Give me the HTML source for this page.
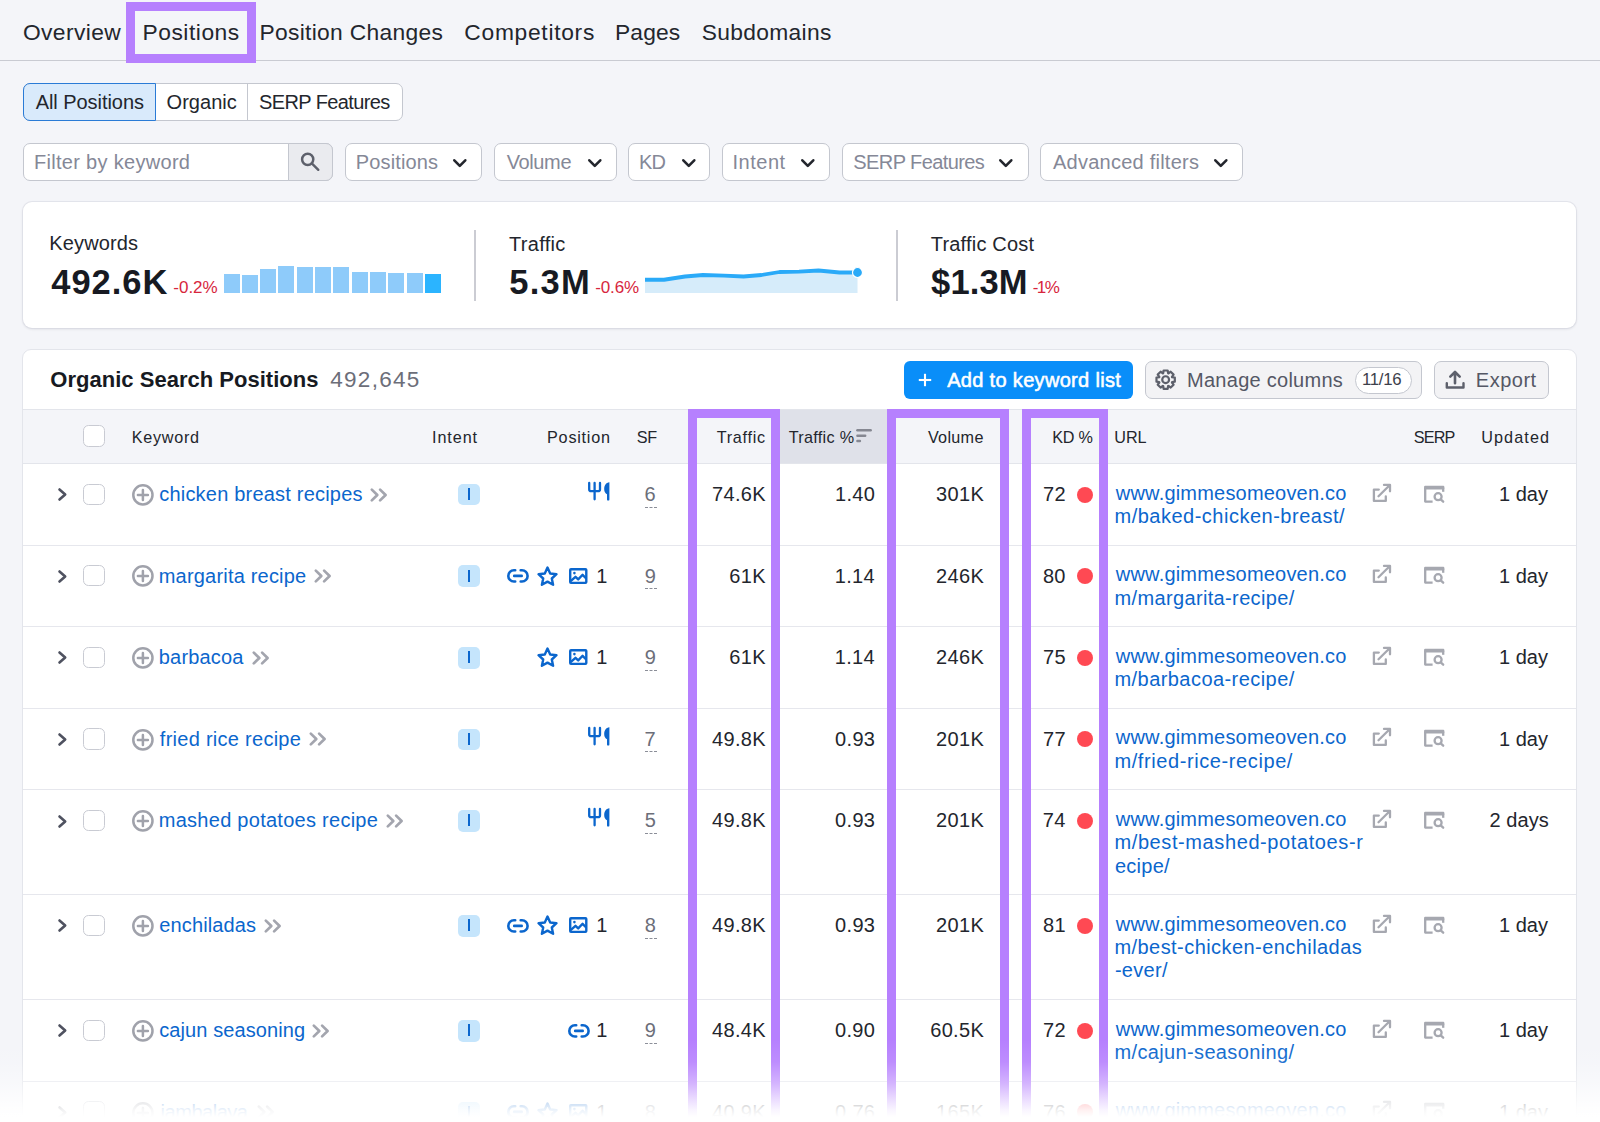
<!DOCTYPE html>
<html><head><meta charset="utf-8"><style>
html,body{margin:0;padding:0}
body{width:1600px;height:1122px;overflow:hidden;position:relative;background:#f4f5f9;font-family:"Liberation Sans", sans-serif}
.t{position:absolute;white-space:nowrap;line-height:1}
svg{display:block}
</style></head><body>
<div class="t" style="left:22.92px;top:20.90px;font-size:22.8px;color:#23262d;font-weight:normal;letter-spacing:0.401px;">Overview</div>
<div class="t" style="left:142.53px;top:20.90px;font-size:22.8px;color:#23262d;font-weight:normal;letter-spacing:0.523px;">Positions</div>
<div class="t" style="left:259.53px;top:20.90px;font-size:22.8px;color:#23262d;font-weight:normal;letter-spacing:0.305px;">Position Changes</div>
<div class="t" style="left:464.34px;top:20.90px;font-size:22.8px;color:#23262d;font-weight:normal;letter-spacing:0.708px;">Competitors</div>
<div class="t" style="left:614.93px;top:20.90px;font-size:22.8px;color:#23262d;font-weight:normal;letter-spacing:0.161px;">Pages</div>
<div class="t" style="left:701.86px;top:20.90px;font-size:22.8px;color:#23262d;font-weight:normal;letter-spacing:0.301px;">Subdomains</div>
<div style="position:absolute;left:0px;top:60px;width:1600px;height:1px;box-sizing:border-box;background:#c9cbd2"></div>
<div style="position:absolute;left:23px;top:83px;width:380px;height:38px;box-sizing:border-box;background:#fff;border:1px solid #c4c7cf;border-radius:7px"></div>
<div style="position:absolute;left:23px;top:83px;width:133px;height:38px;box-sizing:border-box;background:#d9eafb;border:1px solid #2a7bd6;border-radius:7px 0 0 7px"></div>
<div style="position:absolute;left:247px;top:84px;width:1px;height:36px;box-sizing:border-box;background:#c4c7cf"></div>
<div class="t" style="left:35.71px;top:91.82px;font-size:20px;color:#23262d;font-weight:normal;letter-spacing:-0.056px;">All Positions</div>
<div class="t" style="left:166.55px;top:91.82px;font-size:20px;color:#23262d;font-weight:normal;letter-spacing:0.033px;">Organic</div>
<div class="t" style="left:259.09px;top:91.82px;font-size:20px;color:#23262d;font-weight:normal;letter-spacing:-0.610px;">SERP Features</div>
<div style="position:absolute;left:23px;top:143px;width:310px;height:38px;box-sizing:border-box;background:#fff;border:1px solid #c4c7cf;border-radius:7px"></div>
<div style="position:absolute;left:288px;top:143px;width:45px;height:38px;box-sizing:border-box;background:#eaebef;border:1px solid #c4c7cf;border-radius:0 7px 7px 0"></div>
<div class="t" style="left:33.96px;top:151.67px;font-size:20px;color:#858897;font-weight:normal;letter-spacing:0.305px;">Filter by keyword</div>
<svg style="position:absolute;left:300px;top:151px;overflow:visible" width="20" height="20" viewBox="0 0 20 20"><circle cx="7.7" cy="8.3" r="5.6" fill="none" stroke="#5d606b" stroke-width="2.5"/><line x1="11.8" y1="12.4" x2="18.3" y2="18.8" stroke="#5d606b" stroke-width="2.4" stroke-linecap="round"/></svg>
<div style="position:absolute;left:344.5px;top:143px;width:137.89999999999998px;height:38px;box-sizing:border-box;background:#fff;border:1px solid #c4c7cf;border-radius:7px"></div>
<div class="t" style="left:355.86px;top:151.67px;font-size:20px;color:#858897;font-weight:normal;letter-spacing:0.114px;">Positions</div>
<svg style="position:absolute;left:453.2px;top:159px;overflow:visible" width="13.6" height="8.2" viewBox="0 0 13.6 8.2"><polyline points="1.3,1.3 6.8,6.8999999999999995 12.299999999999999,1.3" fill="none" stroke="#23262d" stroke-width="2.6" stroke-linecap="round" stroke-linejoin="round"/></svg>
<div style="position:absolute;left:494.25px;top:143px;width:122.25px;height:38px;box-sizing:border-box;background:#fff;border:1px solid #c4c7cf;border-radius:7px"></div>
<div class="t" style="left:506.66px;top:151.67px;font-size:20px;color:#858897;font-weight:normal;letter-spacing:-0.367px;">Volume</div>
<svg style="position:absolute;left:588px;top:159px;overflow:visible" width="13.6" height="8.2" viewBox="0 0 13.6 8.2"><polyline points="1.3,1.3 6.8,6.8999999999999995 12.299999999999999,1.3" fill="none" stroke="#23262d" stroke-width="2.6" stroke-linecap="round" stroke-linejoin="round"/></svg>
<div style="position:absolute;left:628.25px;top:143px;width:82.0px;height:38px;box-sizing:border-box;background:#fff;border:1px solid #c4c7cf;border-radius:7px"></div>
<div class="t" style="left:639.11px;top:151.67px;font-size:20px;color:#858897;font-weight:normal;letter-spacing:-0.936px;">KD</div>
<svg style="position:absolute;left:681.5px;top:159px;overflow:visible" width="13.6" height="8.2" viewBox="0 0 13.6 8.2"><polyline points="1.3,1.3 6.8,6.8999999999999995 12.299999999999999,1.3" fill="none" stroke="#23262d" stroke-width="2.6" stroke-linecap="round" stroke-linejoin="round"/></svg>
<div style="position:absolute;left:722px;top:143px;width:108px;height:38px;box-sizing:border-box;background:#fff;border:1px solid #c4c7cf;border-radius:7px"></div>
<div class="t" style="left:732.40px;top:151.67px;font-size:20px;color:#858897;font-weight:normal;letter-spacing:0.541px;">Intent</div>
<svg style="position:absolute;left:801px;top:159px;overflow:visible" width="13.6" height="8.2" viewBox="0 0 13.6 8.2"><polyline points="1.3,1.3 6.8,6.8999999999999995 12.299999999999999,1.3" fill="none" stroke="#23262d" stroke-width="2.6" stroke-linecap="round" stroke-linejoin="round"/></svg>
<div style="position:absolute;left:841.6px;top:143px;width:186.9999999999999px;height:38px;box-sizing:border-box;background:#fff;border:1px solid #c4c7cf;border-radius:7px"></div>
<div class="t" style="left:853.29px;top:151.67px;font-size:20px;color:#858897;font-weight:normal;letter-spacing:-0.585px;">SERP Features</div>
<svg style="position:absolute;left:999.3px;top:159px;overflow:visible" width="13.6" height="8.2" viewBox="0 0 13.6 8.2"><polyline points="1.3,1.3 6.8,6.8999999999999995 12.299999999999999,1.3" fill="none" stroke="#23262d" stroke-width="2.6" stroke-linecap="round" stroke-linejoin="round"/></svg>
<div style="position:absolute;left:1040.4px;top:143px;width:202.89999999999986px;height:38px;box-sizing:border-box;background:#fff;border:1px solid #c4c7cf;border-radius:7px"></div>
<div class="t" style="left:1052.96px;top:151.67px;font-size:20px;color:#858897;font-weight:normal;letter-spacing:0.244px;">Advanced filters</div>
<svg style="position:absolute;left:1213.5px;top:159px;overflow:visible" width="13.6" height="8.2" viewBox="0 0 13.6 8.2"><polyline points="1.3,1.3 6.8,6.8999999999999995 12.299999999999999,1.3" fill="none" stroke="#23262d" stroke-width="2.6" stroke-linecap="round" stroke-linejoin="round"/></svg>
<div style="position:absolute;left:23px;top:202px;width:1553px;height:126.3px;box-sizing:border-box;background:#fff;border-radius:9px;box-shadow:0 0 0 1px rgba(215,217,225,0.55), 0 1px 3px rgba(0,0,30,0.12)"></div>
<div class="t" style="left:49.36px;top:233.37px;font-size:20px;color:#23262d;font-weight:normal;letter-spacing:0.136px;">Keywords</div>
<div class="t" style="left:51.28px;top:264.50px;font-size:34.5px;color:#171a22;font-weight:bold;letter-spacing:0.959px;">492.6K</div>
<div class="t" style="left:173.24px;top:279.01px;font-size:17px;color:#d7263d;font-weight:normal;letter-spacing:0.013px;">-0.2%</div>
<div style="position:absolute;left:223.55px;top:273.90px;width:16.2px;height:18.90px;background:#8ecbfa"></div>
<div style="position:absolute;left:241.70px;top:274.65px;width:16.2px;height:18.15px;background:#8ecbfa"></div>
<div style="position:absolute;left:260.00px;top:268.65px;width:16.2px;height:24.15px;background:#8ecbfa"></div>
<div style="position:absolute;left:278.10px;top:265.80px;width:16.2px;height:27.00px;background:#8ecbfa"></div>
<div style="position:absolute;left:296.70px;top:267.45px;width:16.2px;height:25.35px;background:#8ecbfa"></div>
<div style="position:absolute;left:315.00px;top:266.55px;width:16.2px;height:26.25px;background:#8ecbfa"></div>
<div style="position:absolute;left:333.30px;top:266.85px;width:16.2px;height:25.95px;background:#8ecbfa"></div>
<div style="position:absolute;left:351.60px;top:271.95px;width:16.2px;height:20.85px;background:#8ecbfa"></div>
<div style="position:absolute;left:370.00px;top:272.40px;width:16.2px;height:20.40px;background:#8ecbfa"></div>
<div style="position:absolute;left:388.20px;top:272.85px;width:16.2px;height:19.95px;background:#8ecbfa"></div>
<div style="position:absolute;left:406.70px;top:273.45px;width:16.2px;height:19.35px;background:#8ecbfa"></div>
<div style="position:absolute;left:425.00px;top:273.60px;width:16.2px;height:19.20px;background:#2bb4ff"></div>
<div style="position:absolute;left:474.3px;top:230.25px;width:2px;height:70.5px;box-sizing:border-box;background:#cbccd3"></div>
<div class="t" style="left:509.05px;top:233.57px;font-size:20px;color:#23262d;font-weight:normal;letter-spacing:0.287px;">Traffic</div>
<div class="t" style="left:509.24px;top:264.50px;font-size:34.5px;color:#171a22;font-weight:bold;letter-spacing:1.290px;">5.3M</div>
<div class="t" style="left:595.24px;top:279.01px;font-size:17px;color:#d7263d;font-weight:normal;letter-spacing:-0.137px;">-0.6%</div>
<svg style="position:absolute;left:640px;top:260px;overflow:visible" width="230" height="40" viewBox="0 0 230 40"><polygon points="5,19.75 24,19.75 45,16.5 63,15 84,15.699999999999989 103.5,16.5 121.5,15 139.5,12 159,11.600000000000023 178.5,10.5 199.5,12.5 217.5,12.5 217.5,33 5,33" fill="#d6ecfa"/><polyline points="5,19.75 24,19.75 45,16.5 63,15 84,15.699999999999989 103.5,16.5 121.5,15 139.5,12 159,11.600000000000023 178.5,10.5 199.5,12.5 217.5,12.5" fill="none" stroke="#2aaaf8" stroke-width="3.8" stroke-linejoin="round"/><circle cx="217.5" cy="12.5" r="5" fill="#2aaaf8" stroke="#fff" stroke-width="1.2"/></svg>
<div style="position:absolute;left:895.8px;top:230.25px;width:2px;height:70.5px;box-sizing:border-box;background:#cbccd3"></div>
<div class="t" style="left:930.75px;top:233.57px;font-size:20px;color:#23262d;font-weight:normal;letter-spacing:0.196px;">Traffic Cost</div>
<div class="t" style="left:931.05px;top:264.50px;font-size:34.5px;color:#171a22;font-weight:bold;letter-spacing:0.144px;">$1.3M</div>
<div class="t" style="left:1032.74px;top:279.01px;font-size:17px;color:#d7263d;font-weight:normal;letter-spacing:-1.535px;">-1%</div>
<div style="position:absolute;left:22px;top:349px;width:1555px;height:900px;box-sizing:border-box;background:#fff;border:1px solid #e3e5eb;border-radius:9px"></div>
<div class="t" style="left:50.30px;top:369.08px;font-size:22px;color:#171a22;font-weight:bold;letter-spacing:0.020px;">Organic Search Positions</div>
<div class="t" style="left:330.18px;top:368.95px;font-size:22.5px;color:#6c6e79;font-weight:normal;letter-spacing:1.305px;">492,645</div>
<div style="position:absolute;left:903.5px;top:361px;width:229.5px;height:38px;box-sizing:border-box;background:#098ef9;border-radius:6px"></div>
<svg style="position:absolute;left:917.5px;top:372.5px;overflow:visible" width="14" height="14" viewBox="0 0 14 14"><line x1="7" y1="0.8" x2="7" y2="13.2" stroke="#fff" stroke-width="2.1"/><line x1="0.8" y1="7" x2="13.2" y2="7" stroke="#fff" stroke-width="2.1"/></svg>
<div class="t" style="left:947.16px;top:369.57px;font-size:20px;color:#fff;font-weight:normal;letter-spacing:0.324px;-webkit-text-stroke:0.55px #fff">Add to keyword list</div>
<div style="position:absolute;left:1145px;top:361.2px;width:277px;height:37.6px;box-sizing:border-box;background:#f3f3f5;border:1px solid #c4c7cf;border-radius:7px"></div>
<svg style="position:absolute;left:1155px;top:369px;overflow:visible" width="21.3" height="21.3" viewBox="0 0 21.3 21.3"><g fill="none" stroke="#5d606b" stroke-width="2.2" stroke-linejoin="round"><path d="M8.22 4.19 L8.60 1.48 L12.70 1.48 L13.08 4.19 L13.50 4.36 L15.69 2.71 L18.59 5.61 L16.94 7.80 L17.11 8.22 L19.82 8.60 L19.82 12.70 L17.11 13.08 L16.94 13.50 L18.59 15.69 L15.69 18.59 L13.50 16.94 L13.08 17.11 L12.70 19.82 L8.60 19.82 L8.22 17.11 L7.80 16.94 L5.61 18.59 L2.71 15.69 L4.36 13.50 L4.19 13.08 L1.48 12.70 L1.48 8.60 L4.19 8.22 L4.36 7.80 L2.71 5.61 L5.61 2.71 L7.80 4.36Z"/><circle cx="10.65" cy="10.65" r="3.4"/></g></svg>
<div class="t" style="left:1187.06px;top:369.57px;font-size:20px;color:#555865;font-weight:normal;letter-spacing:0.266px;">Manage columns</div>
<div style="position:absolute;left:1354.5px;top:366.5px;width:57px;height:27px;box-sizing:border-box;background:#fff;border:1px solid #c4c7cf;border-radius:14px"></div>
<div class="t" style="left:1362.02px;top:371.78px;font-size:16.8px;color:#3d404b;font-weight:normal;letter-spacing:-0.306px;">11/16</div>
<div style="position:absolute;left:1433.5px;top:361.2px;width:115.2px;height:37.6px;box-sizing:border-box;background:#f3f3f5;border:1px solid #c4c7cf;border-radius:7px"></div>
<svg style="position:absolute;left:1444.7px;top:370px;overflow:visible" width="20" height="19" viewBox="0 0 20 19"><g fill="none" stroke="#5d606b" stroke-width="2.4" stroke-linecap="round" stroke-linejoin="round"><path d="M10 13.2V2.2M5.3 6.7 10 2l4.7 4.7" stroke-width="2.6"/><path d="M1.8 13.2v4.3h16.7v-4.3"/></g></svg>
<div class="t" style="left:1475.86px;top:369.57px;font-size:20px;color:#555865;font-weight:normal;letter-spacing:0.497px;">Export</div>
<div style="position:absolute;left:23px;top:408.5px;width:1553px;height:55px;box-sizing:border-box;background:#f4f5f9;border-top:1px solid #e3e5eb;border-bottom:1px solid #e3e5eb"></div>
<div style="position:absolute;left:780px;top:409.5px;width:107px;height:53px;box-sizing:border-box;background:#dfe1e9"></div>
<div style="position:absolute;left:83.3px;top:425.2px;width:21.4px;height:21.4px;box-sizing:border-box;background:#fff;border:1.3px solid #c9cbd3;border-radius:5.5px"></div>
<div class="t" style="left:131.77px;top:429.29px;font-size:16.2px;color:#23262d;font-weight:normal;letter-spacing:0.707px;">Keyword</div>
<div class="t" style="left:432.00px;top:429.29px;font-size:16.2px;color:#23262d;font-weight:normal;letter-spacing:0.916px;">Intent</div>
<div class="t" style="left:547.07px;top:429.29px;font-size:16.2px;color:#23262d;font-weight:normal;letter-spacing:0.764px;">Position</div>
<div class="t" style="left:636.76px;top:429.29px;font-size:16.2px;color:#23262d;font-weight:normal;letter-spacing:-0.417px;">SF</div>
<div class="t" style="left:716.64px;top:429.29px;font-size:16.2px;color:#23262d;font-weight:normal;letter-spacing:0.732px;">Traffic</div>
<div class="t" style="left:788.64px;top:429.29px;font-size:16.2px;color:#23262d;font-weight:normal;letter-spacing:0.304px;">Traffic %</div>
<div class="t" style="left:927.93px;top:429.29px;font-size:16.2px;color:#23262d;font-weight:normal;letter-spacing:0.293px;">Volume</div>
<div class="t" style="left:1052.27px;top:429.29px;font-size:16.2px;color:#23262d;font-weight:normal;letter-spacing:-0.234px;">KD %</div>
<div class="t" style="left:1114.35px;top:429.29px;font-size:16.2px;color:#23262d;font-weight:normal;letter-spacing:-0.110px;">URL</div>
<div class="t" style="left:1413.66px;top:429.29px;font-size:16.2px;color:#23262d;font-weight:normal;letter-spacing:-0.775px;">SERP</div>
<div class="t" style="left:1481.25px;top:429.29px;font-size:16.2px;color:#23262d;font-weight:normal;letter-spacing:1.091px;">Updated</div>
<svg style="position:absolute;left:855px;top:428px;overflow:visible" width="17" height="15" viewBox="0 0 17 15"><g stroke="#858791" stroke-width="2.4" stroke-linecap="round"><line x1="2.4" y1="2.2" x2="15.7" y2="2.2"/><line x1="2.4" y1="7.8" x2="10.2" y2="7.8"/><line x1="2.4" y1="13" x2="4.9" y2="13"/></g></svg>
<div style="position:absolute;left:23px;top:544.60px;width:1553px;height:1px;background:#e6e7ed"></div>
<svg style="position:absolute;left:58px;top:488.1px;overflow:visible" width="9" height="13" viewBox="0 0 9 13"><polyline points="1.5,1.5 7.2,6.5 1.5,11.5" fill="none" stroke="#4f5260" stroke-width="2.6" stroke-linecap="round" stroke-linejoin="round"/></svg>
<div style="position:absolute;left:83.3px;top:483.50px;width:21.4px;height:21.4px;box-sizing:border-box;background:#fff;border:1.3px solid #c9cbd3;border-radius:5.5px"></div>
<svg style="position:absolute;left:132px;top:483.8px;overflow:visible" width="22" height="22" viewBox="0 0 22 22"><circle cx="10.9" cy="10.9" r="9.6" fill="none" stroke="#a0a2ab" stroke-width="2.5"/><path d="M10.9 5.9v10M5.9 10.9h10" stroke="#a0a2ab" stroke-width="2.5" stroke-linecap="round"/></svg>
<div class="t" style="left:159.25px;top:484.07px;font-size:20px;color:#0b66cd;font-weight:normal;letter-spacing:0.202px;">chicken breast recipes</div>
<svg style="position:absolute;left:370.25px;top:487.6px;overflow:visible" width="18" height="14" viewBox="0 0 18 14"><g fill="none" stroke="#a3a5ae" stroke-width="2.7" stroke-linecap="round" stroke-linejoin="round"><polyline points="1.8,1.6 7.3,7 1.8,12.4"/><polyline points="10.1,1.6 15.6,7 10.1,12.4"/></g></svg>
<div style="position:absolute;left:458px;top:483.70px;width:21.8px;height:21.7px;background:#c5e5fc;border-radius:5px"></div>
<div style="position:absolute;left:467.8px;top:488.00px;width:2.6px;height:12px;background:#0b66cd"></div>
<svg style="position:absolute;left:587.5px;top:480.90000000000003px;overflow:visible" width="22" height="21" viewBox="0 0 22 21"><g fill="none" stroke="#0b66cd" stroke-width="2.3" stroke-linecap="round" stroke-linejoin="round"><path d="M1.2 1.9v6.3q0 2 2 2h6.8q2 0 2-2V1.9M6.6 1.9V18.3"/></g><path d="M21.4 1.3C17.9 1.5 16.2 4.6 16.2 8.2C16.2 10.6 17.3 12.3 19 13.3V18.4Q19 19.6 20.2 19.6Q21.4 19.6 21.4 18.4Z" fill="#0b66cd"/></svg>
<div class="t" style="left:644.58px;top:484.07px;font-size:20px;color:#6c6e79;font-weight:normal;letter-spacing:0.000px;">6</div>
<div style="position:absolute;left:644.6px;top:506.60px;width:12.5px;height:0;border-top:1.2px dashed #8b8e98"></div>
<div class="t" style="left:711.96px;top:484.07px;font-size:20px;color:#23262d;font-weight:normal;letter-spacing:0.350px;">74.6K</div>
<div class="t" style="left:834.91px;top:484.07px;font-size:20px;color:#23262d;font-weight:normal;letter-spacing:0.350px;">1.40</div>
<div class="t" style="left:936.07px;top:484.07px;font-size:20px;color:#23262d;font-weight:normal;letter-spacing:0.350px;">301K</div>
<div class="t" style="left:1043.11px;top:484.07px;font-size:20px;color:#23262d;font-weight:normal;letter-spacing:0.350px;">72</div>
<div style="position:absolute;left:1077px;top:486.60px;width:16px;height:16px;border-radius:50%;background:#ff4953"></div>
<div class="t" style="left:1115.83px;top:482.67px;font-size:20px;color:#0b66cd;font-weight:normal;letter-spacing:0.198px;">www.gimmesomeoven.co</div>
<div class="t" style="left:1114.47px;top:505.92px;font-size:20px;color:#0b66cd;font-weight:normal;letter-spacing:0.502px;">m/baked-chicken-breast/</div>
<svg style="position:absolute;left:1371.5px;top:482.6px;overflow:visible" width="20" height="19" viewBox="0 0 20 19"><g fill="none" stroke="#a6a8b0" stroke-width="2.3" stroke-linecap="round" stroke-linejoin="round"><path d="M6.8 6.6H1.9V17.9H13.8V13.5"/><path d="M12 1.9h6v6.4M17.6 2.3 6.5 13.3"/></g></svg>
<svg style="position:absolute;left:1424px;top:485.6px;overflow:visible" width="21" height="17" viewBox="0 0 21 17"><rect x="0.1" y="-0.3" width="20.2" height="3.8" rx="1" fill="#a6a8b0"/><g fill="none" stroke="#a6a8b0" stroke-width="2.3" stroke-linejoin="round"><path d="M8.6 15.6H1.2V1.5"/><path d="M19.2 1.5V5.8"/><circle cx="14.1" cy="10.7" r="3.5"/><path d="M16.7 13.3l2.5 2.4" stroke-linecap="round"/></g></svg>
<div class="t" style="left:1498.91px;top:484.07px;font-size:20px;color:#23262d;font-weight:normal;letter-spacing:0.050px;">1 day</div>
<div style="position:absolute;left:23px;top:626.20px;width:1553px;height:1px;background:#e6e7ed"></div>
<svg style="position:absolute;left:58px;top:569.6999999999999px;overflow:visible" width="9" height="13" viewBox="0 0 9 13"><polyline points="1.5,1.5 7.2,6.5 1.5,11.5" fill="none" stroke="#4f5260" stroke-width="2.6" stroke-linecap="round" stroke-linejoin="round"/></svg>
<div style="position:absolute;left:83.3px;top:565.10px;width:21.4px;height:21.4px;box-sizing:border-box;background:#fff;border:1.3px solid #c9cbd3;border-radius:5.5px"></div>
<svg style="position:absolute;left:132px;top:565.4px;overflow:visible" width="22" height="22" viewBox="0 0 22 22"><circle cx="10.9" cy="10.9" r="9.6" fill="none" stroke="#a0a2ab" stroke-width="2.5"/><path d="M10.9 5.9v10M5.9 10.9h10" stroke="#a0a2ab" stroke-width="2.5" stroke-linecap="round"/></svg>
<div class="t" style="left:158.77px;top:565.67px;font-size:20px;color:#0b66cd;font-weight:normal;letter-spacing:0.194px;">margarita recipe</div>
<svg style="position:absolute;left:313.8px;top:569.1999999999999px;overflow:visible" width="18" height="14" viewBox="0 0 18 14"><g fill="none" stroke="#a3a5ae" stroke-width="2.7" stroke-linecap="round" stroke-linejoin="round"><polyline points="1.8,1.6 7.3,7 1.8,12.4"/><polyline points="10.1,1.6 15.6,7 10.1,12.4"/></g></svg>
<div style="position:absolute;left:458px;top:565.30px;width:21.8px;height:21.7px;background:#c5e5fc;border-radius:5px"></div>
<div style="position:absolute;left:467.8px;top:569.60px;width:2.6px;height:12px;background:#0b66cd"></div>
<div class="t" style="left:596.25px;top:565.67px;font-size:20px;color:#23262d;font-weight:normal;letter-spacing:0.000px;">1</div>
<svg style="position:absolute;left:568.7px;top:567.6999999999999px;overflow:visible" width="18.6" height="16.2" viewBox="0 0 18.6 16.2"><g fill="none" stroke="#0b66cd" stroke-width="2.4" stroke-linejoin="round"><rect x="1.2" y="1.2" width="16.1" height="13.7" rx="0.8"/><path d="M1.6 13.2 6.5 8.8l2.7 2.6 4.4-4.6 3.6 3.7"/></g><circle cx="5.4" cy="5.1" r="1.3" fill="#0b66cd"/></svg>
<svg style="position:absolute;left:537.2px;top:565.5999999999999px;overflow:visible" width="21" height="20" viewBox="0 0 21 20"><path d="M10.5 1.6l2.7 5.9 6.3.7-4.7 4.3 1.3 6.3-5.6-3.2-5.6 3.2 1.3-6.3L1.5 8.2l6.3-.7z" fill="none" stroke="#0b66cd" stroke-width="2.4" stroke-linejoin="round"/></svg>
<svg style="position:absolute;left:506.8px;top:569.1999999999999px;overflow:visible" width="22" height="14" viewBox="0 0 22 14"><g fill="none" stroke="#0b66cd" stroke-width="2.6" stroke-linecap="round"><path d="M8.2 1.3H6.9a5.6 5.6 0 0 0 0 11.2h1.3M13.7 1.3h1.3a5.6 5.6 0 0 1 0 11.2h-1.3M7.2 6.9h7.5"/></g></svg>
<div class="t" style="left:644.66px;top:565.67px;font-size:20px;color:#6c6e79;font-weight:normal;letter-spacing:0.000px;">9</div>
<div style="position:absolute;left:644.6px;top:588.20px;width:12.5px;height:0;border-top:1.2px dashed #8b8e98"></div>
<div class="t" style="left:729.34px;top:565.67px;font-size:20px;color:#23262d;font-weight:normal;letter-spacing:0.350px;">61K</div>
<div class="t" style="left:834.71px;top:565.67px;font-size:20px;color:#23262d;font-weight:normal;letter-spacing:0.350px;">1.14</div>
<div class="t" style="left:936.07px;top:565.67px;font-size:20px;color:#23262d;font-weight:normal;letter-spacing:0.350px;">246K</div>
<div class="t" style="left:1042.89px;top:565.67px;font-size:20px;color:#23262d;font-weight:normal;letter-spacing:0.350px;">80</div>
<div style="position:absolute;left:1077px;top:568.20px;width:16px;height:16px;border-radius:50%;background:#ff4953"></div>
<div class="t" style="left:1115.83px;top:564.27px;font-size:20px;color:#0b66cd;font-weight:normal;letter-spacing:0.198px;">www.gimmesomeoven.co</div>
<div class="t" style="left:1114.47px;top:587.52px;font-size:20px;color:#0b66cd;font-weight:normal;letter-spacing:0.358px;">m/margarita-recipe/</div>
<svg style="position:absolute;left:1371.5px;top:564.1999999999999px;overflow:visible" width="20" height="19" viewBox="0 0 20 19"><g fill="none" stroke="#a6a8b0" stroke-width="2.3" stroke-linecap="round" stroke-linejoin="round"><path d="M6.8 6.6H1.9V17.9H13.8V13.5"/><path d="M12 1.9h6v6.4M17.6 2.3 6.5 13.3"/></g></svg>
<svg style="position:absolute;left:1424px;top:567.1999999999999px;overflow:visible" width="21" height="17" viewBox="0 0 21 17"><rect x="0.1" y="-0.3" width="20.2" height="3.8" rx="1" fill="#a6a8b0"/><g fill="none" stroke="#a6a8b0" stroke-width="2.3" stroke-linejoin="round"><path d="M8.6 15.6H1.2V1.5"/><path d="M19.2 1.5V5.8"/><circle cx="14.1" cy="10.7" r="3.5"/><path d="M16.7 13.3l2.5 2.4" stroke-linecap="round"/></g></svg>
<div class="t" style="left:1498.91px;top:565.67px;font-size:20px;color:#23262d;font-weight:normal;letter-spacing:0.050px;">1 day</div>
<div style="position:absolute;left:23px;top:707.80px;width:1553px;height:1px;background:#e6e7ed"></div>
<svg style="position:absolute;left:58px;top:651.3px;overflow:visible" width="9" height="13" viewBox="0 0 9 13"><polyline points="1.5,1.5 7.2,6.5 1.5,11.5" fill="none" stroke="#4f5260" stroke-width="2.6" stroke-linecap="round" stroke-linejoin="round"/></svg>
<div style="position:absolute;left:83.3px;top:646.70px;width:21.4px;height:21.4px;box-sizing:border-box;background:#fff;border:1.3px solid #c9cbd3;border-radius:5.5px"></div>
<svg style="position:absolute;left:132px;top:647.0px;overflow:visible" width="22" height="22" viewBox="0 0 22 22"><circle cx="10.9" cy="10.9" r="9.6" fill="none" stroke="#a0a2ab" stroke-width="2.5"/><path d="M10.9 5.9v10M5.9 10.9h10" stroke="#a0a2ab" stroke-width="2.5" stroke-linecap="round"/></svg>
<div class="t" style="left:158.81px;top:647.27px;font-size:20px;color:#0b66cd;font-weight:normal;letter-spacing:0.184px;">barbacoa</div>
<svg style="position:absolute;left:252.0px;top:650.8px;overflow:visible" width="18" height="14" viewBox="0 0 18 14"><g fill="none" stroke="#a3a5ae" stroke-width="2.7" stroke-linecap="round" stroke-linejoin="round"><polyline points="1.8,1.6 7.3,7 1.8,12.4"/><polyline points="10.1,1.6 15.6,7 10.1,12.4"/></g></svg>
<div style="position:absolute;left:458px;top:646.90px;width:21.8px;height:21.7px;background:#c5e5fc;border-radius:5px"></div>
<div style="position:absolute;left:467.8px;top:651.20px;width:2.6px;height:12px;background:#0b66cd"></div>
<div class="t" style="left:596.25px;top:647.27px;font-size:20px;color:#23262d;font-weight:normal;letter-spacing:0.000px;">1</div>
<svg style="position:absolute;left:568.7px;top:649.3px;overflow:visible" width="18.6" height="16.2" viewBox="0 0 18.6 16.2"><g fill="none" stroke="#0b66cd" stroke-width="2.4" stroke-linejoin="round"><rect x="1.2" y="1.2" width="16.1" height="13.7" rx="0.8"/><path d="M1.6 13.2 6.5 8.8l2.7 2.6 4.4-4.6 3.6 3.7"/></g><circle cx="5.4" cy="5.1" r="1.3" fill="#0b66cd"/></svg>
<svg style="position:absolute;left:537.2px;top:647.1999999999999px;overflow:visible" width="21" height="20" viewBox="0 0 21 20"><path d="M10.5 1.6l2.7 5.9 6.3.7-4.7 4.3 1.3 6.3-5.6-3.2-5.6 3.2 1.3-6.3L1.5 8.2l6.3-.7z" fill="none" stroke="#0b66cd" stroke-width="2.4" stroke-linejoin="round"/></svg>
<div class="t" style="left:644.66px;top:647.27px;font-size:20px;color:#6c6e79;font-weight:normal;letter-spacing:0.000px;">9</div>
<div style="position:absolute;left:644.6px;top:669.80px;width:12.5px;height:0;border-top:1.2px dashed #8b8e98"></div>
<div class="t" style="left:729.34px;top:647.27px;font-size:20px;color:#23262d;font-weight:normal;letter-spacing:0.350px;">61K</div>
<div class="t" style="left:834.71px;top:647.27px;font-size:20px;color:#23262d;font-weight:normal;letter-spacing:0.350px;">1.14</div>
<div class="t" style="left:936.07px;top:647.27px;font-size:20px;color:#23262d;font-weight:normal;letter-spacing:0.350px;">246K</div>
<div class="t" style="left:1042.94px;top:647.27px;font-size:20px;color:#23262d;font-weight:normal;letter-spacing:0.350px;">75</div>
<div style="position:absolute;left:1077px;top:649.80px;width:16px;height:16px;border-radius:50%;background:#ff4953"></div>
<div class="t" style="left:1115.83px;top:645.87px;font-size:20px;color:#0b66cd;font-weight:normal;letter-spacing:0.198px;">www.gimmesomeoven.co</div>
<div class="t" style="left:1114.47px;top:669.12px;font-size:20px;color:#0b66cd;font-weight:normal;letter-spacing:0.443px;">m/barbacoa-recipe/</div>
<svg style="position:absolute;left:1371.5px;top:645.8px;overflow:visible" width="20" height="19" viewBox="0 0 20 19"><g fill="none" stroke="#a6a8b0" stroke-width="2.3" stroke-linecap="round" stroke-linejoin="round"><path d="M6.8 6.6H1.9V17.9H13.8V13.5"/><path d="M12 1.9h6v6.4M17.6 2.3 6.5 13.3"/></g></svg>
<svg style="position:absolute;left:1424px;top:648.8px;overflow:visible" width="21" height="17" viewBox="0 0 21 17"><rect x="0.1" y="-0.3" width="20.2" height="3.8" rx="1" fill="#a6a8b0"/><g fill="none" stroke="#a6a8b0" stroke-width="2.3" stroke-linejoin="round"><path d="M8.6 15.6H1.2V1.5"/><path d="M19.2 1.5V5.8"/><circle cx="14.1" cy="10.7" r="3.5"/><path d="M16.7 13.3l2.5 2.4" stroke-linecap="round"/></g></svg>
<div class="t" style="left:1498.91px;top:647.27px;font-size:20px;color:#23262d;font-weight:normal;letter-spacing:0.050px;">1 day</div>
<div style="position:absolute;left:23px;top:789.40px;width:1553px;height:1px;background:#e6e7ed"></div>
<svg style="position:absolute;left:58px;top:732.9px;overflow:visible" width="9" height="13" viewBox="0 0 9 13"><polyline points="1.5,1.5 7.2,6.5 1.5,11.5" fill="none" stroke="#4f5260" stroke-width="2.6" stroke-linecap="round" stroke-linejoin="round"/></svg>
<div style="position:absolute;left:83.3px;top:728.30px;width:21.4px;height:21.4px;box-sizing:border-box;background:#fff;border:1.3px solid #c9cbd3;border-radius:5.5px"></div>
<svg style="position:absolute;left:132px;top:728.6px;overflow:visible" width="22" height="22" viewBox="0 0 22 22"><circle cx="10.9" cy="10.9" r="9.6" fill="none" stroke="#a0a2ab" stroke-width="2.5"/><path d="M10.9 5.9v10M5.9 10.9h10" stroke="#a0a2ab" stroke-width="2.5" stroke-linecap="round"/></svg>
<div class="t" style="left:159.82px;top:728.87px;font-size:20px;color:#0b66cd;font-weight:normal;letter-spacing:0.272px;">fried rice recipe</div>
<svg style="position:absolute;left:308.5px;top:732.4px;overflow:visible" width="18" height="14" viewBox="0 0 18 14"><g fill="none" stroke="#a3a5ae" stroke-width="2.7" stroke-linecap="round" stroke-linejoin="round"><polyline points="1.8,1.6 7.3,7 1.8,12.4"/><polyline points="10.1,1.6 15.6,7 10.1,12.4"/></g></svg>
<div style="position:absolute;left:458px;top:728.50px;width:21.8px;height:21.7px;background:#c5e5fc;border-radius:5px"></div>
<div style="position:absolute;left:467.8px;top:732.80px;width:2.6px;height:12px;background:#0b66cd"></div>
<svg style="position:absolute;left:587.5px;top:725.6999999999999px;overflow:visible" width="22" height="21" viewBox="0 0 22 21"><g fill="none" stroke="#0b66cd" stroke-width="2.3" stroke-linecap="round" stroke-linejoin="round"><path d="M1.2 1.9v6.3q0 2 2 2h6.8q2 0 2-2V1.9M6.6 1.9V18.3"/></g><path d="M21.4 1.3C17.9 1.5 16.2 4.6 16.2 8.2C16.2 10.6 17.3 12.3 19 13.3V18.4Q19 19.6 20.2 19.6Q21.4 19.6 21.4 18.4Z" fill="#0b66cd"/></svg>
<div class="t" style="left:644.57px;top:728.87px;font-size:20px;color:#6c6e79;font-weight:normal;letter-spacing:0.000px;">7</div>
<div style="position:absolute;left:644.6px;top:751.40px;width:12.5px;height:0;border-top:1.2px dashed #8b8e98"></div>
<div class="t" style="left:711.96px;top:728.87px;font-size:20px;color:#23262d;font-weight:normal;letter-spacing:0.350px;">49.8K</div>
<div class="t" style="left:835.00px;top:728.87px;font-size:20px;color:#23262d;font-weight:normal;letter-spacing:0.350px;">0.93</div>
<div class="t" style="left:936.07px;top:728.87px;font-size:20px;color:#23262d;font-weight:normal;letter-spacing:0.350px;">201K</div>
<div class="t" style="left:1043.11px;top:728.87px;font-size:20px;color:#23262d;font-weight:normal;letter-spacing:0.350px;">77</div>
<div style="position:absolute;left:1077px;top:731.40px;width:16px;height:16px;border-radius:50%;background:#ff4953"></div>
<div class="t" style="left:1115.83px;top:727.47px;font-size:20px;color:#0b66cd;font-weight:normal;letter-spacing:0.198px;">www.gimmesomeoven.co</div>
<div class="t" style="left:1114.47px;top:750.72px;font-size:20px;color:#0b66cd;font-weight:normal;letter-spacing:0.591px;">m/fried-rice-recipe/</div>
<svg style="position:absolute;left:1371.5px;top:727.4px;overflow:visible" width="20" height="19" viewBox="0 0 20 19"><g fill="none" stroke="#a6a8b0" stroke-width="2.3" stroke-linecap="round" stroke-linejoin="round"><path d="M6.8 6.6H1.9V17.9H13.8V13.5"/><path d="M12 1.9h6v6.4M17.6 2.3 6.5 13.3"/></g></svg>
<svg style="position:absolute;left:1424px;top:730.4px;overflow:visible" width="21" height="17" viewBox="0 0 21 17"><rect x="0.1" y="-0.3" width="20.2" height="3.8" rx="1" fill="#a6a8b0"/><g fill="none" stroke="#a6a8b0" stroke-width="2.3" stroke-linejoin="round"><path d="M8.6 15.6H1.2V1.5"/><path d="M19.2 1.5V5.8"/><circle cx="14.1" cy="10.7" r="3.5"/><path d="M16.7 13.3l2.5 2.4" stroke-linecap="round"/></g></svg>
<div class="t" style="left:1498.91px;top:728.87px;font-size:20px;color:#23262d;font-weight:normal;letter-spacing:0.050px;">1 day</div>
<div style="position:absolute;left:23px;top:894.30px;width:1553px;height:1px;background:#e6e7ed"></div>
<svg style="position:absolute;left:58px;top:814.5px;overflow:visible" width="9" height="13" viewBox="0 0 9 13"><polyline points="1.5,1.5 7.2,6.5 1.5,11.5" fill="none" stroke="#4f5260" stroke-width="2.6" stroke-linecap="round" stroke-linejoin="round"/></svg>
<div style="position:absolute;left:83.3px;top:809.90px;width:21.4px;height:21.4px;box-sizing:border-box;background:#fff;border:1.3px solid #c9cbd3;border-radius:5.5px"></div>
<svg style="position:absolute;left:132px;top:810.2px;overflow:visible" width="22" height="22" viewBox="0 0 22 22"><circle cx="10.9" cy="10.9" r="9.6" fill="none" stroke="#a0a2ab" stroke-width="2.5"/><path d="M10.9 5.9v10M5.9 10.9h10" stroke="#a0a2ab" stroke-width="2.5" stroke-linecap="round"/></svg>
<div class="t" style="left:158.77px;top:810.47px;font-size:20px;color:#0b66cd;font-weight:normal;letter-spacing:0.269px;">mashed potatoes recipe</div>
<svg style="position:absolute;left:385.5px;top:814.0px;overflow:visible" width="18" height="14" viewBox="0 0 18 14"><g fill="none" stroke="#a3a5ae" stroke-width="2.7" stroke-linecap="round" stroke-linejoin="round"><polyline points="1.8,1.6 7.3,7 1.8,12.4"/><polyline points="10.1,1.6 15.6,7 10.1,12.4"/></g></svg>
<div style="position:absolute;left:458px;top:810.10px;width:21.8px;height:21.7px;background:#c5e5fc;border-radius:5px"></div>
<div style="position:absolute;left:467.8px;top:814.40px;width:2.6px;height:12px;background:#0b66cd"></div>
<svg style="position:absolute;left:587.5px;top:807.3px;overflow:visible" width="22" height="21" viewBox="0 0 22 21"><g fill="none" stroke="#0b66cd" stroke-width="2.3" stroke-linecap="round" stroke-linejoin="round"><path d="M1.2 1.9v6.3q0 2 2 2h6.8q2 0 2-2V1.9M6.6 1.9V18.3"/></g><path d="M21.4 1.3C17.9 1.5 16.2 4.6 16.2 8.2C16.2 10.6 17.3 12.3 19 13.3V18.4Q19 19.6 20.2 19.6Q21.4 19.6 21.4 18.4Z" fill="#0b66cd"/></svg>
<div class="t" style="left:644.80px;top:810.47px;font-size:20px;color:#6c6e79;font-weight:normal;letter-spacing:0.000px;">5</div>
<div style="position:absolute;left:644.6px;top:833.00px;width:12.5px;height:0;border-top:1.2px dashed #8b8e98"></div>
<div class="t" style="left:711.96px;top:810.47px;font-size:20px;color:#23262d;font-weight:normal;letter-spacing:0.350px;">49.8K</div>
<div class="t" style="left:835.00px;top:810.47px;font-size:20px;color:#23262d;font-weight:normal;letter-spacing:0.350px;">0.93</div>
<div class="t" style="left:936.07px;top:810.47px;font-size:20px;color:#23262d;font-weight:normal;letter-spacing:0.350px;">201K</div>
<div class="t" style="left:1042.69px;top:810.47px;font-size:20px;color:#23262d;font-weight:normal;letter-spacing:0.350px;">74</div>
<div style="position:absolute;left:1077px;top:813.00px;width:16px;height:16px;border-radius:50%;background:#ff4953"></div>
<div class="t" style="left:1115.83px;top:809.07px;font-size:20px;color:#0b66cd;font-weight:normal;letter-spacing:0.198px;">www.gimmesomeoven.co</div>
<div class="t" style="left:1114.47px;top:832.32px;font-size:20px;color:#0b66cd;font-weight:normal;letter-spacing:0.601px;">m/best-mashed-potatoes-r</div>
<div class="t" style="left:1114.95px;top:855.57px;font-size:20px;color:#0b66cd;font-weight:normal;letter-spacing:0.256px;">ecipe/</div>
<svg style="position:absolute;left:1371.5px;top:809.0px;overflow:visible" width="20" height="19" viewBox="0 0 20 19"><g fill="none" stroke="#a6a8b0" stroke-width="2.3" stroke-linecap="round" stroke-linejoin="round"><path d="M6.8 6.6H1.9V17.9H13.8V13.5"/><path d="M12 1.9h6v6.4M17.6 2.3 6.5 13.3"/></g></svg>
<svg style="position:absolute;left:1424px;top:812.0px;overflow:visible" width="21" height="17" viewBox="0 0 21 17"><rect x="0.1" y="-0.3" width="20.2" height="3.8" rx="1" fill="#a6a8b0"/><g fill="none" stroke="#a6a8b0" stroke-width="2.3" stroke-linejoin="round"><path d="M8.6 15.6H1.2V1.5"/><path d="M19.2 1.5V5.8"/><circle cx="14.1" cy="10.7" r="3.5"/><path d="M16.7 13.3l2.5 2.4" stroke-linecap="round"/></g></svg>
<div class="t" style="left:1489.55px;top:810.47px;font-size:20px;color:#23262d;font-weight:normal;letter-spacing:0.050px;">2 days</div>
<div style="position:absolute;left:23px;top:999.20px;width:1553px;height:1px;background:#e6e7ed"></div>
<svg style="position:absolute;left:58px;top:919.4px;overflow:visible" width="9" height="13" viewBox="0 0 9 13"><polyline points="1.5,1.5 7.2,6.5 1.5,11.5" fill="none" stroke="#4f5260" stroke-width="2.6" stroke-linecap="round" stroke-linejoin="round"/></svg>
<div style="position:absolute;left:83.3px;top:914.80px;width:21.4px;height:21.4px;box-sizing:border-box;background:#fff;border:1.3px solid #c9cbd3;border-radius:5.5px"></div>
<svg style="position:absolute;left:132px;top:915.1px;overflow:visible" width="22" height="22" viewBox="0 0 22 22"><circle cx="10.9" cy="10.9" r="9.6" fill="none" stroke="#a0a2ab" stroke-width="2.5"/><path d="M10.9 5.9v10M5.9 10.9h10" stroke="#a0a2ab" stroke-width="2.5" stroke-linecap="round"/></svg>
<div class="t" style="left:159.25px;top:915.37px;font-size:20px;color:#0b66cd;font-weight:normal;letter-spacing:0.127px;">enchiladas</div>
<svg style="position:absolute;left:263.8px;top:918.9px;overflow:visible" width="18" height="14" viewBox="0 0 18 14"><g fill="none" stroke="#a3a5ae" stroke-width="2.7" stroke-linecap="round" stroke-linejoin="round"><polyline points="1.8,1.6 7.3,7 1.8,12.4"/><polyline points="10.1,1.6 15.6,7 10.1,12.4"/></g></svg>
<div style="position:absolute;left:458px;top:915.00px;width:21.8px;height:21.7px;background:#c5e5fc;border-radius:5px"></div>
<div style="position:absolute;left:467.8px;top:919.30px;width:2.6px;height:12px;background:#0b66cd"></div>
<div class="t" style="left:596.25px;top:915.37px;font-size:20px;color:#23262d;font-weight:normal;letter-spacing:0.000px;">1</div>
<svg style="position:absolute;left:568.7px;top:917.4px;overflow:visible" width="18.6" height="16.2" viewBox="0 0 18.6 16.2"><g fill="none" stroke="#0b66cd" stroke-width="2.4" stroke-linejoin="round"><rect x="1.2" y="1.2" width="16.1" height="13.7" rx="0.8"/><path d="M1.6 13.2 6.5 8.8l2.7 2.6 4.4-4.6 3.6 3.7"/></g><circle cx="5.4" cy="5.1" r="1.3" fill="#0b66cd"/></svg>
<svg style="position:absolute;left:537.2px;top:915.3px;overflow:visible" width="21" height="20" viewBox="0 0 21 20"><path d="M10.5 1.6l2.7 5.9 6.3.7-4.7 4.3 1.3 6.3-5.6-3.2-5.6 3.2 1.3-6.3L1.5 8.2l6.3-.7z" fill="none" stroke="#0b66cd" stroke-width="2.4" stroke-linejoin="round"/></svg>
<svg style="position:absolute;left:506.8px;top:918.9px;overflow:visible" width="22" height="14" viewBox="0 0 22 14"><g fill="none" stroke="#0b66cd" stroke-width="2.6" stroke-linecap="round"><path d="M8.2 1.3H6.9a5.6 5.6 0 0 0 0 11.2h1.3M13.7 1.3h1.3a5.6 5.6 0 0 1 0 11.2h-1.3M7.2 6.9h7.5"/></g></svg>
<div class="t" style="left:644.73px;top:915.37px;font-size:20px;color:#6c6e79;font-weight:normal;letter-spacing:0.000px;">8</div>
<div style="position:absolute;left:644.6px;top:937.90px;width:12.5px;height:0;border-top:1.2px dashed #8b8e98"></div>
<div class="t" style="left:711.96px;top:915.37px;font-size:20px;color:#23262d;font-weight:normal;letter-spacing:0.350px;">49.8K</div>
<div class="t" style="left:835.00px;top:915.37px;font-size:20px;color:#23262d;font-weight:normal;letter-spacing:0.350px;">0.93</div>
<div class="t" style="left:936.07px;top:915.37px;font-size:20px;color:#23262d;font-weight:normal;letter-spacing:0.350px;">201K</div>
<div class="t" style="left:1043.08px;top:915.37px;font-size:20px;color:#23262d;font-weight:normal;letter-spacing:0.350px;">81</div>
<div style="position:absolute;left:1077px;top:917.90px;width:16px;height:16px;border-radius:50%;background:#ff4953"></div>
<div class="t" style="left:1115.83px;top:913.97px;font-size:20px;color:#0b66cd;font-weight:normal;letter-spacing:0.198px;">www.gimmesomeoven.co</div>
<div class="t" style="left:1114.47px;top:937.22px;font-size:20px;color:#0b66cd;font-weight:normal;letter-spacing:0.436px;">m/best-chicken-enchiladas</div>
<div class="t" style="left:1114.91px;top:960.47px;font-size:20px;color:#0b66cd;font-weight:normal;letter-spacing:0.293px;">-ever/</div>
<svg style="position:absolute;left:1371.5px;top:913.9px;overflow:visible" width="20" height="19" viewBox="0 0 20 19"><g fill="none" stroke="#a6a8b0" stroke-width="2.3" stroke-linecap="round" stroke-linejoin="round"><path d="M6.8 6.6H1.9V17.9H13.8V13.5"/><path d="M12 1.9h6v6.4M17.6 2.3 6.5 13.3"/></g></svg>
<svg style="position:absolute;left:1424px;top:916.9px;overflow:visible" width="21" height="17" viewBox="0 0 21 17"><rect x="0.1" y="-0.3" width="20.2" height="3.8" rx="1" fill="#a6a8b0"/><g fill="none" stroke="#a6a8b0" stroke-width="2.3" stroke-linejoin="round"><path d="M8.6 15.6H1.2V1.5"/><path d="M19.2 1.5V5.8"/><circle cx="14.1" cy="10.7" r="3.5"/><path d="M16.7 13.3l2.5 2.4" stroke-linecap="round"/></g></svg>
<div class="t" style="left:1498.91px;top:915.37px;font-size:20px;color:#23262d;font-weight:normal;letter-spacing:0.050px;">1 day</div>
<div style="position:absolute;left:23px;top:1080.80px;width:1553px;height:1px;background:#e6e7ed"></div>
<svg style="position:absolute;left:58px;top:1024.3px;overflow:visible" width="9" height="13" viewBox="0 0 9 13"><polyline points="1.5,1.5 7.2,6.5 1.5,11.5" fill="none" stroke="#4f5260" stroke-width="2.6" stroke-linecap="round" stroke-linejoin="round"/></svg>
<div style="position:absolute;left:83.3px;top:1019.70px;width:21.4px;height:21.4px;box-sizing:border-box;background:#fff;border:1.3px solid #c9cbd3;border-radius:5.5px"></div>
<svg style="position:absolute;left:132px;top:1020.0px;overflow:visible" width="22" height="22" viewBox="0 0 22 22"><circle cx="10.9" cy="10.9" r="9.6" fill="none" stroke="#a0a2ab" stroke-width="2.5"/><path d="M10.9 5.9v10M5.9 10.9h10" stroke="#a0a2ab" stroke-width="2.5" stroke-linecap="round"/></svg>
<div class="t" style="left:159.25px;top:1020.27px;font-size:20px;color:#0b66cd;font-weight:normal;letter-spacing:0.099px;">cajun seasoning</div>
<svg style="position:absolute;left:312.4px;top:1023.8px;overflow:visible" width="18" height="14" viewBox="0 0 18 14"><g fill="none" stroke="#a3a5ae" stroke-width="2.7" stroke-linecap="round" stroke-linejoin="round"><polyline points="1.8,1.6 7.3,7 1.8,12.4"/><polyline points="10.1,1.6 15.6,7 10.1,12.4"/></g></svg>
<div style="position:absolute;left:458px;top:1019.90px;width:21.8px;height:21.7px;background:#c5e5fc;border-radius:5px"></div>
<div style="position:absolute;left:467.8px;top:1024.20px;width:2.6px;height:12px;background:#0b66cd"></div>
<div class="t" style="left:596.25px;top:1020.27px;font-size:20px;color:#23262d;font-weight:normal;letter-spacing:0.000px;">1</div>
<svg style="position:absolute;left:567.5px;top:1023.8px;overflow:visible" width="22" height="14" viewBox="0 0 22 14"><g fill="none" stroke="#0b66cd" stroke-width="2.6" stroke-linecap="round"><path d="M8.2 1.3H6.9a5.6 5.6 0 0 0 0 11.2h1.3M13.7 1.3h1.3a5.6 5.6 0 0 1 0 11.2h-1.3M7.2 6.9h7.5"/></g></svg>
<div class="t" style="left:644.66px;top:1020.27px;font-size:20px;color:#6c6e79;font-weight:normal;letter-spacing:0.000px;">9</div>
<div style="position:absolute;left:644.6px;top:1042.80px;width:12.5px;height:0;border-top:1.2px dashed #8b8e98"></div>
<div class="t" style="left:711.96px;top:1020.27px;font-size:20px;color:#23262d;font-weight:normal;letter-spacing:0.350px;">48.4K</div>
<div class="t" style="left:834.91px;top:1020.27px;font-size:20px;color:#23262d;font-weight:normal;letter-spacing:0.350px;">0.90</div>
<div class="t" style="left:930.16px;top:1020.27px;font-size:20px;color:#23262d;font-weight:normal;letter-spacing:0.350px;">60.5K</div>
<div class="t" style="left:1043.11px;top:1020.27px;font-size:20px;color:#23262d;font-weight:normal;letter-spacing:0.350px;">72</div>
<div style="position:absolute;left:1077px;top:1022.80px;width:16px;height:16px;border-radius:50%;background:#ff4953"></div>
<div class="t" style="left:1115.83px;top:1018.87px;font-size:20px;color:#0b66cd;font-weight:normal;letter-spacing:0.198px;">www.gimmesomeoven.co</div>
<div class="t" style="left:1114.47px;top:1042.12px;font-size:20px;color:#0b66cd;font-weight:normal;letter-spacing:0.359px;">m/cajun-seasoning/</div>
<svg style="position:absolute;left:1371.5px;top:1018.8px;overflow:visible" width="20" height="19" viewBox="0 0 20 19"><g fill="none" stroke="#a6a8b0" stroke-width="2.3" stroke-linecap="round" stroke-linejoin="round"><path d="M6.8 6.6H1.9V17.9H13.8V13.5"/><path d="M12 1.9h6v6.4M17.6 2.3 6.5 13.3"/></g></svg>
<svg style="position:absolute;left:1424px;top:1021.8px;overflow:visible" width="21" height="17" viewBox="0 0 21 17"><rect x="0.1" y="-0.3" width="20.2" height="3.8" rx="1" fill="#a6a8b0"/><g fill="none" stroke="#a6a8b0" stroke-width="2.3" stroke-linejoin="round"><path d="M8.6 15.6H1.2V1.5"/><path d="M19.2 1.5V5.8"/><circle cx="14.1" cy="10.7" r="3.5"/><path d="M16.7 13.3l2.5 2.4" stroke-linecap="round"/></g></svg>
<div class="t" style="left:1498.91px;top:1020.27px;font-size:20px;color:#23262d;font-weight:normal;letter-spacing:0.050px;">1 day</div>
<div style="position:absolute;left:23px;top:1162.40px;width:1553px;height:1px;background:#e6e7ed"></div>
<svg style="position:absolute;left:58px;top:1105.8999999999999px;overflow:visible" width="9" height="13" viewBox="0 0 9 13"><polyline points="1.5,1.5 7.2,6.5 1.5,11.5" fill="none" stroke="#4f5260" stroke-width="2.6" stroke-linecap="round" stroke-linejoin="round"/></svg>
<div style="position:absolute;left:83.3px;top:1101.30px;width:21.4px;height:21.4px;box-sizing:border-box;background:#fff;border:1.3px solid #c9cbd3;border-radius:5.5px"></div>
<svg style="position:absolute;left:132px;top:1101.6px;overflow:visible" width="22" height="22" viewBox="0 0 22 22"><circle cx="10.9" cy="10.9" r="9.6" fill="none" stroke="#a0a2ab" stroke-width="2.5"/><path d="M10.9 5.9v10M5.9 10.9h10" stroke="#a0a2ab" stroke-width="2.5" stroke-linecap="round"/></svg>
<div class="t" style="left:160.59px;top:1101.87px;font-size:20px;color:#0b66cd;font-weight:normal;letter-spacing:-0.469px;">jambalaya</div>
<svg style="position:absolute;left:256.5px;top:1105.3999999999999px;overflow:visible" width="18" height="14" viewBox="0 0 18 14"><g fill="none" stroke="#a3a5ae" stroke-width="2.7" stroke-linecap="round" stroke-linejoin="round"><polyline points="1.8,1.6 7.3,7 1.8,12.4"/><polyline points="10.1,1.6 15.6,7 10.1,12.4"/></g></svg>
<div style="position:absolute;left:458px;top:1101.50px;width:21.8px;height:21.7px;background:#c5e5fc;border-radius:5px"></div>
<div style="position:absolute;left:467.8px;top:1105.80px;width:2.6px;height:12px;background:#0b66cd"></div>
<div class="t" style="left:596.25px;top:1101.87px;font-size:20px;color:#23262d;font-weight:normal;letter-spacing:0.000px;">1</div>
<svg style="position:absolute;left:568.7px;top:1103.8999999999999px;overflow:visible" width="18.6" height="16.2" viewBox="0 0 18.6 16.2"><g fill="none" stroke="#0b66cd" stroke-width="2.4" stroke-linejoin="round"><rect x="1.2" y="1.2" width="16.1" height="13.7" rx="0.8"/><path d="M1.6 13.2 6.5 8.8l2.7 2.6 4.4-4.6 3.6 3.7"/></g><circle cx="5.4" cy="5.1" r="1.3" fill="#0b66cd"/></svg>
<svg style="position:absolute;left:537.2px;top:1101.8px;overflow:visible" width="21" height="20" viewBox="0 0 21 20"><path d="M10.5 1.6l2.7 5.9 6.3.7-4.7 4.3 1.3 6.3-5.6-3.2-5.6 3.2 1.3-6.3L1.5 8.2l6.3-.7z" fill="none" stroke="#0b66cd" stroke-width="2.4" stroke-linejoin="round"/></svg>
<svg style="position:absolute;left:506.8px;top:1105.3999999999999px;overflow:visible" width="22" height="14" viewBox="0 0 22 14"><g fill="none" stroke="#0b66cd" stroke-width="2.6" stroke-linecap="round"><path d="M8.2 1.3H6.9a5.6 5.6 0 0 0 0 11.2h1.3M13.7 1.3h1.3a5.6 5.6 0 0 1 0 11.2h-1.3M7.2 6.9h7.5"/></g></svg>
<div class="t" style="left:644.73px;top:1101.87px;font-size:20px;color:#6c6e79;font-weight:normal;letter-spacing:0.000px;">8</div>
<div style="position:absolute;left:644.6px;top:1124.40px;width:12.5px;height:0;border-top:1.2px dashed #8b8e98"></div>
<div class="t" style="left:711.96px;top:1101.87px;font-size:20px;color:#23262d;font-weight:normal;letter-spacing:0.350px;">40.9K</div>
<div class="t" style="left:835.00px;top:1101.87px;font-size:20px;color:#23262d;font-weight:normal;letter-spacing:0.350px;">0.76</div>
<div class="t" style="left:936.07px;top:1101.87px;font-size:20px;color:#23262d;font-weight:normal;letter-spacing:0.350px;">165K</div>
<div class="t" style="left:1042.98px;top:1101.87px;font-size:20px;color:#23262d;font-weight:normal;letter-spacing:0.350px;">76</div>
<div style="position:absolute;left:1077px;top:1104.40px;width:16px;height:16px;border-radius:50%;background:#ff4953"></div>
<div class="t" style="left:1115.83px;top:1100.47px;font-size:20px;color:#0b66cd;font-weight:normal;letter-spacing:0.198px;">www.gimmesomeoven.co</div>
<div class="t" style="left:1114.47px;top:1123.72px;font-size:20px;color:#0b66cd;font-weight:normal;letter-spacing:0.081px;">m/jambalaya-recipe/</div>
<svg style="position:absolute;left:1371.5px;top:1100.3999999999999px;overflow:visible" width="20" height="19" viewBox="0 0 20 19"><g fill="none" stroke="#a6a8b0" stroke-width="2.3" stroke-linecap="round" stroke-linejoin="round"><path d="M6.8 6.6H1.9V17.9H13.8V13.5"/><path d="M12 1.9h6v6.4M17.6 2.3 6.5 13.3"/></g></svg>
<svg style="position:absolute;left:1424px;top:1103.3999999999999px;overflow:visible" width="21" height="17" viewBox="0 0 21 17"><rect x="0.1" y="-0.3" width="20.2" height="3.8" rx="1" fill="#a6a8b0"/><g fill="none" stroke="#a6a8b0" stroke-width="2.3" stroke-linejoin="round"><path d="M8.6 15.6H1.2V1.5"/><path d="M19.2 1.5V5.8"/><circle cx="14.1" cy="10.7" r="3.5"/><path d="M16.7 13.3l2.5 2.4" stroke-linecap="round"/></g></svg>
<div class="t" style="left:1498.91px;top:1101.87px;font-size:20px;color:#23262d;font-weight:normal;letter-spacing:0.050px;">1 day</div>
<div style="position:absolute;left:688px;top:409px;width:92px;height:891px;box-sizing:border-box;border:9px solid #b680fe"></div>
<div style="position:absolute;left:887px;top:409px;width:122px;height:891px;box-sizing:border-box;border:9px solid #b680fe"></div>
<div style="position:absolute;left:1021.6px;top:409px;width:86.80000000000007px;height:891px;box-sizing:border-box;border:9px solid #b680fe"></div>
<div style="position:absolute;left:126px;top:2px;width:130px;height:61px;box-sizing:border-box;border:9px solid #b680fe"></div>
<div style="position:absolute;left:0;top:1040px;width:1600px;height:82px;background:linear-gradient(to bottom, rgba(255,255,255,0) 0px, rgba(255,255,255,0.1) 22px, rgba(255,255,255,0.4) 43px, rgba(255,255,255,0.7) 58px, rgba(255,255,255,0.92) 70px, #fff 77px, #fff 82px)"></div>
</body></html>
